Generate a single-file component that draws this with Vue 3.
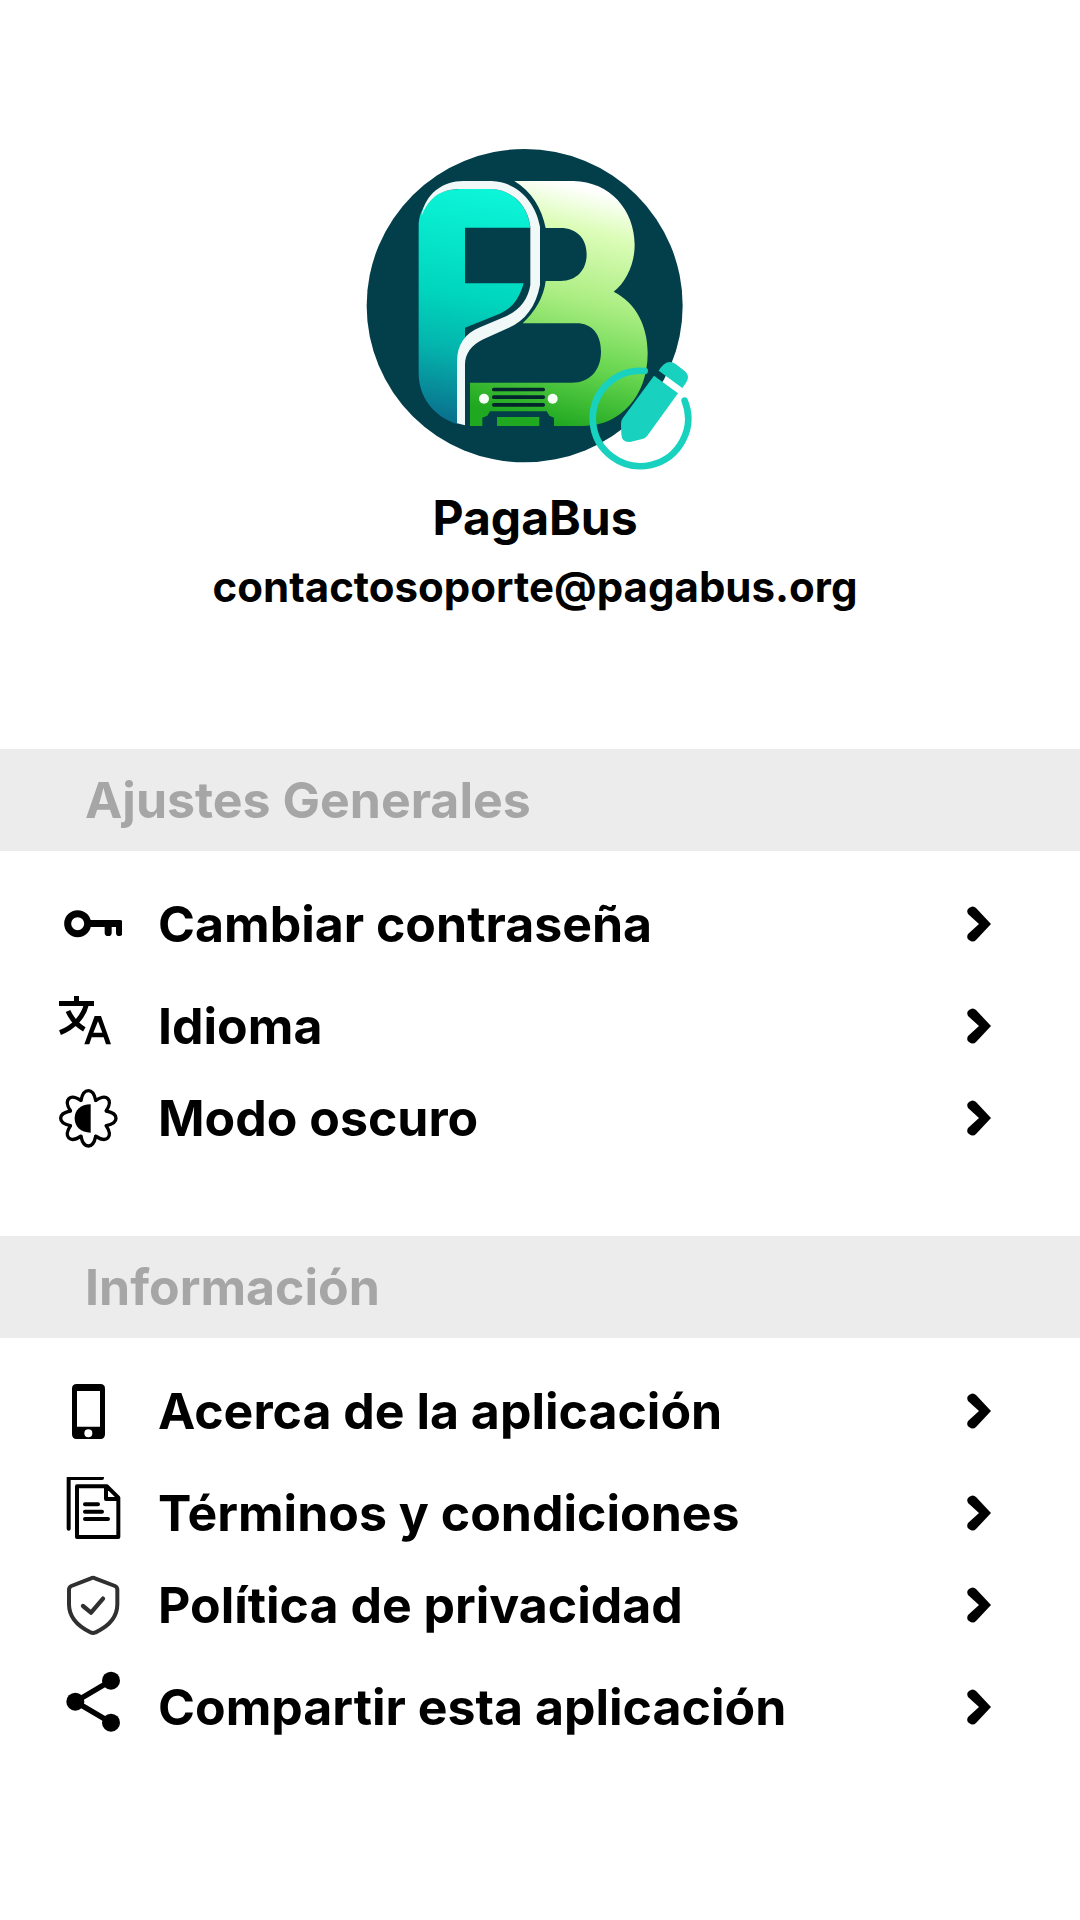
<script setup>
const sections = [
  {
    title: 'Ajustes Generales',
    items: [
      { icon: 'key', box: '54 24 192 216', label: 'Cambiar contraseña' },
      { icon: 'language', box: '54 330 192 216', label: 'Idioma' },
      { icon: 'theme', box: '54 606 192 216', label: 'Modo oscuro' },
    ],
  },
  {
    title: 'Información',
    items: [
      { icon: 'phone', box: '54 12 192 216', label: 'Acerca de la aplicación' },
      { icon: 'terms', box: '54 321 192 216', label: 'Términos y condiciones' },
      { icon: 'shield', box: '54 24 192 216', label: 'Política de privacidad' },
      { icon: 'share', box: '54 330 192 216', label: 'Compartir esta aplicación' },
    ],
  },
]
const petals = [0, 45, 90, 135, 180, 225, 270, 315]
</script>

<template>
  <main class="page">
    <header class="profile">
      <div class="avatar">
        <svg class="logo" viewBox="0 0 1110 1080" role="img" aria-label="PagaBus">
          <defs>
            <linearGradient id="teal" gradientUnits="userSpaceOnUse" x1="400" y1="180" x2="270" y2="880">
              <stop offset="0" stop-color="#0cf5d8" />
              <stop offset=".45" stop-color="#00d6bd" />
              <stop offset=".68" stop-color="#04b5ad" />
              <stop offset="1" stop-color="#0a6c8c" />
            </linearGradient>
            <linearGradient id="green" gradientUnits="userSpaceOnUse" x1="790" y1="195" x2="620" y2="888">
              <stop offset="0" stop-color="#ffffff" />
              <stop offset=".17" stop-color="#dcfdb8" />
              <stop offset=".45" stop-color="#adee84" />
              <stop offset=".72" stop-color="#68d650" />
              <stop offset="1" stop-color="#1fa820" />
            </linearGradient>
          </defs>
          <ellipse cx="524" cy="527" rx="474" ry="470" fill="#033f4a" />
          <path fill="url(#green)" d="M493 153H670C780 155 854 240 854 345C854 400 830 455 791 485C860 520 893 590 893 670C893 800 810 888 700 888H360V758H665C720 758 753 720 753 665C753 612 725 580 680 580H518C555 545 582 500 587 453H632C680 453 710 420 710 373S680 294 632 294H587C575 235 545 185 493 153Z" />
          <path fill="url(#teal)" d="M206 290C206 220 260 177 330 177H425C490 180 535 230 541 293H345V460H521C505 515 480 540 440 555L345 593V640C330 655 321 670 321 700V882C250 860 206 800 206 730Z" />
          <path fill="#f1f8f8" d="M215 258C225 190 280 153 340 153H425C500 155 557 215 570 290V465C558 530 525 572 475 594L400 628C365 645 345 670 345 705V886L321 880V695C321 645 345 610 390 592L470 558C510 540 535 505 541 465V290C535 230 490 180 425 177H330C270 177 235 205 215 258Z" />
          <g fill="#03262d">
            <rect x="426" y="773" width="159" height="11" rx="5" />
            <rect x="426" y="796" width="159" height="11" rx="5" />
            <rect x="426" y="819" width="159" height="11" rx="5" />
          </g>
          <g fill="#f5fff5">
            <circle cx="402" cy="806" r="15" />
            <circle cx="608" cy="806" r="15" />
          </g>
          <path fill="#033f4a" fill-rule="evenodd" d="M397 890V863L412 857L420 844H590L598 857L612 863V890ZM441 861V888H568V861Z" />
        </svg>
        <button class="edit" type="button" aria-label="Editar foto">
          <svg viewBox="714 690 315 333">
            <path fill="none" stroke="#18d2bf" stroke-width="20" stroke-linecap="round" d="M884 723A143 143 0 1 0 1004 812" />
            <path fill="#18d2bf" d="M926 722Q950 682 978 703L1003 722Q1022 738 1008 758L997 774ZM912 737L984 790L892 917Q886 925 877 927L840 936Q815 938 814 912L813 882Q813 872 818 865Z" />
          </svg>
        </button>
      </div>
      <h1 class="name">PagaBus</h1>
      <a class="email" href="mailto:contactosoporte@pagabus.org">contactosoporte@pagabus.org</a>
    </header>

    <section v-for="section in sections" :key="section.title">
      <h2 class="band">{{ section.title }}</h2>
      <ul class="list">
        <li v-for="item in section.items" :key="item.label" class="entry">
          <button class="row" type="button">
            <svg class="icon" :viewBox="item.box" aria-hidden="true">
              <g v-if="item.icon === 'key'">
                <circle cx="113" cy="131" r="30" fill="none" stroke="#000" stroke-width="21" />
                <path d="M146 120H240Q248 120 248 129V158Q248 168 238 168Q228 168 228 158V141H215V158Q215 168 205 168Q194 168 194 158V141H146Z" />
              </g>
              <g v-else-if="item.icon === 'language'">
                <path d="M57 363H102V348H117V363H162V378H57Z" />
                <path fill="none" stroke="#000" stroke-width="15" d="M139 374C131 407 104 441 60 458M84 393C94 415 110 435 133 448" />
                <path fill-rule="evenodd" d="M133 493L164 408H183L213 493H198L191 472H155L148 493ZM174 424L160 458H187Z" />
              </g>
              <g v-else-if="item.icon === 'theme'">
                <path
                  v-for="angle in petals"
                  :key="angle"
                  fill="none"
                  stroke="#000"
                  stroke-width="10"
                  stroke-linecap="round"
                  :transform="`rotate(${angle} 145 715)`"
                  d="M123 661C127 641 135 632 145 632S163 641 167 661"
                />
                <path d="M152 673V758C122 758 104 740 104 715S122 673 152 673Z" />
              </g>
              <path v-else-if="item.icon === 'phone'" fill-rule="evenodd" d="M110 39H181Q195 39 195 53V190Q195 204 181 204H110Q96 204 96 190V53Q96 39 110 39ZM111 60V167H180V60ZM145 175A12 12 0 1 0 145 199A12 12 0 1 0 145 175Z" />
              <g v-else-if="item.icon === 'terms'" fill="none" stroke="#000" stroke-width="12" stroke-linecap="round" stroke-linejoin="round">
                <path d="M86 476V324H186M111 349H201L235 383V501H111ZM198 352V387H233M135 403H174M135 425H186M135 447H204" />
              </g>
              <g v-else-if="item.icon === 'shield'" fill="none" stroke="#303030" stroke-width="12" stroke-linecap="round" stroke-linejoin="round">
                <path d="M153 52Q159 49 165 52L225 75Q232 78 232 86V130C232 165 210 194 167 214Q159 218 151 214C110 194 87 165 87 130V86Q87 78 94 75Z" />
                <path d="M129 135L153 155L189 113" stroke-width="13" />
              </g>
              <g v-else>
                <path fill="none" stroke="#000" stroke-width="16" d="M213 359L106 422L213 485" />
                <circle cx="213" cy="359" r="27" />
                <circle cx="106" cy="422" r="27" />
                <circle cx="213" cy="485" r="27" />
              </g>
            </svg>
            <span class="label">{{ item.label }}</span>
            <svg class="chevron" viewBox="0 0 24 36" aria-hidden="true">
              <path d="M1 8Q-1 4 2 2Q6 -1 9 2L24 18L9 34Q6 37 2 34Q-1 32 1 28L12 18Z" />
            </svg>
          </button>
        </li>
      </ul>
    </section>
  </main>
</template>

<style>
body {
  margin: 0;
  background: #fff;
}
</style>

<style scoped>
.page {
  font-family: Inter, "Liberation Sans", sans-serif;
  font-weight: 700;
  color: #000;
}

.profile {
  display: flex;
  flex-direction: column;
  align-items: center;
  padding: 130px 10px 137px 0;
}

.avatar {
  position: relative;
  width: 370px;
  height: 360px;
}

.logo {
  display: block;
  width: 100%;
  height: 100%;
}

.edit {
  position: absolute;
  left: 238px;
  top: 230px;
  width: 105px;
  height: 111px;
  padding: 0;
  border: 0;
  background: none;
  cursor: pointer;
}

.edit svg {
  display: block;
  width: 100%;
  height: 100%;
}

.name {
  margin: 0;
  font-size: 48px;
  line-height: 56px;
}

.email {
  margin-top: 16px;
  font-size: 42px;
  line-height: 50px;
  color: inherit;
  text-decoration: none;
}

.band {
  margin: 0;
  padding: 0 85px;
  background: #ececec;
  color: #a6a6a6;
  font-size: 50px;
  line-height: 102px;
}

.list {
  margin: 0;
  padding: 43px 0 88px;
  list-style: none;
}

.entry {
  margin-bottom: 42px;
}

.entry:nth-child(even) {
  margin-bottom: 32px;
}

.entry:last-child {
  margin-bottom: 0;
}

.row {
  display: flex;
  align-items: center;
  width: 100%;
  height: 60px;
  padding: 0 89px 0 58px;
  border: 0;
  background: none;
  color: inherit;
  font: inherit;
  font-size: 50px;
  line-height: 60px;
  text-align: left;
  white-space: nowrap;
  cursor: pointer;
}

.icon {
  flex: none;
  width: 64px;
  height: 72px;
}

.label {
  flex: 1;
  margin-left: 36px;
}

.chevron {
  flex: none;
  width: 24px;
  height: 36px;
}
</style>
